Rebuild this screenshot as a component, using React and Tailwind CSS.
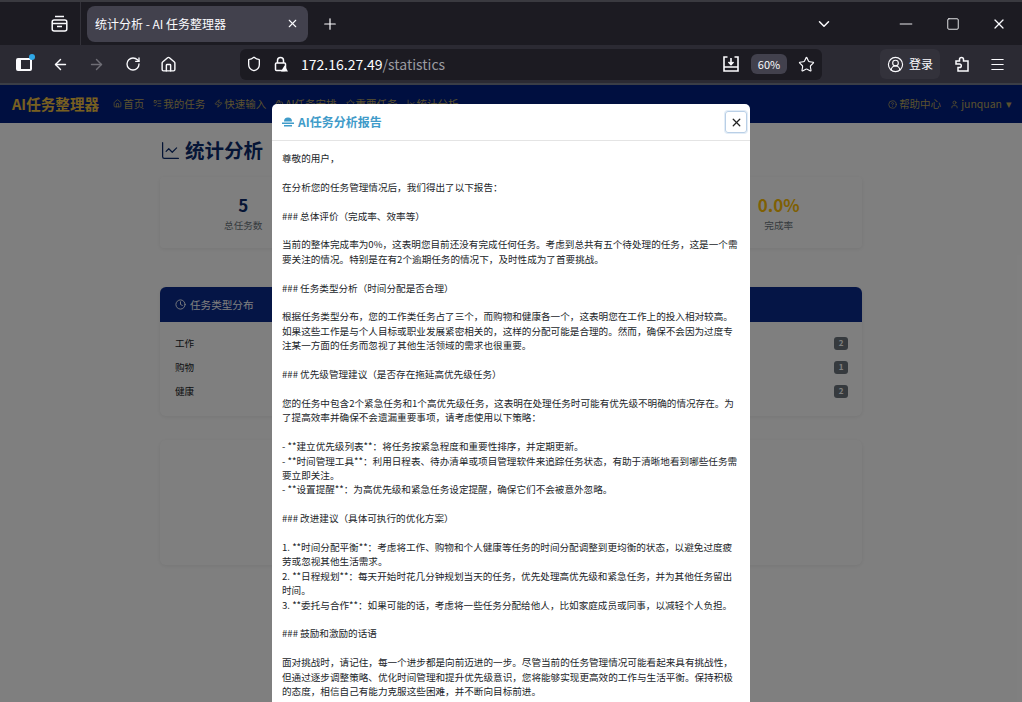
import React from "react";
import {
  ArrowLeft,
  ArrowRight,
  Bot,
  ChevronDown,
  CircleHelp,
  CircleUserRound,
  Clock,
  Home,
  LineChart,
  ListTodo,
  Menu,
  Minus,
  Plus,
  RotateCw,
  Shield,
  Square,
  Star,
  User,
  X,
  Zap,
} from "lucide-react";

const FONT = "[font-family:'Noto_Sans_CJK_SC','Liberation_Sans',sans-serif]";

const report = `尊敬的用户，

在分析您的任务管理情况后，我们得出了以下报告：

### 总体评价（完成率、效率等）

当前的整体完成率为0%，这表明您目前还没有完成任何任务。考虑到总共有五个待处理的任务，这是一个需要关注的情况。特别是在有2个逾期任务的情况下，及时性成为了首要挑战。

### 任务类型分析（时间分配是否合理）

根据任务类型分布，您的工作类任务占了三个，而购物和健康各一个，这表明您在工作上的投入相对较高。如果这些工作是与个人目标或职业发展紧密相关的，这样的分配可能是合理的。然而，确保不会因为过度专注某一方面的任务而忽视了其他生活领域的需求也很重要。

### 优先级管理建议（是否存在拖延高优先级任务）

您的任务中包含2个紧急任务和1个高优先级任务，这表明在处理任务时可能有优先级不明确的情况存在。为了提高效率并确保不会遗漏重要事项，请考虑使用以下策略：

- **建立优先级列表**：将任务按紧急程度和重要性排序，并定期更新。
- **时间管理工具**：利用日程表、待办清单或项目管理软件来追踪任务状态，有助于清晰地看到哪些任务需要立即关注。
- **设置提醒**：为高优先级和紧急任务设定提醒，确保它们不会被意外忽略。

### 改进建议（具体可执行的优化方案）

1. **时间分配平衡**：考虑将工作、购物和个人健康等任务的时间分配调整到更均衡的状态，以避免过度疲劳或忽视其他生活需求。
2. **日程规划**：每天开始时花几分钟规划当天的任务，优先处理高优先级和紧急任务，并为其他任务留出时间。
3. **委托与合作**：如果可能的话，考虑将一些任务分配给他人，比如家庭成员或同事，以减轻个人负担。

### 鼓励和激励的话语

面对挑战时，请记住，每一个进步都是向前迈进的一步。尽管当前的任务管理情况可能看起来具有挑战性，但通过逐步调整策略、优化时间管理和提升优先级意识，您将能够实现更高效的工作与生活平衡。保持积极的态度，相信自己有能力克服这些困难，并不断向目标前进。`;

const navItems = [
  { label: "首页", Icon: Home },
  { label: "我的任务", Icon: ListTodo },
  { label: "快速输入", Icon: Zap },
  { label: "AI任务安排", Icon: Bot },
  { label: "重要任务", Icon: Star },
  { label: "统计分析", Icon: LineChart },
];
const types = [
  { name: "工作", count: 2 },
  { name: "购物", count: 1 },
  { name: "健康", count: 2 },
];

function TitleBar() {
  return (
    <div className="flex h-[45px] shrink-0 items-center border-t-2 border-[#3a3a40] bg-[#1c1b22] text-[#fbfbfe]">
      <div className="flex h-full w-[81px] items-center justify-end border-r border-[#33323a] pr-[12px]">
        <svg width="17" height="17" viewBox="0 0 17 17" fill="none" stroke="currentColor" strokeWidth="1.5">
          <path d="M4 1.5h9" />
          <rect x="1.2" y="5" width="14.6" height="11" rx="2" />
          <path d="M1.2 8.5h14.6M6 11.5h5" />
        </svg>
      </div>
      <div className="ml-[6px] flex h-[36px] w-[221px] items-center justify-between rounded-lg bg-[#42414d] pl-[8px] pr-[9px] text-[12px]">
        <span>统计分析 - AI 任务整理器</span>
        <X size={13} />
      </div>
      <Plus size={18} strokeWidth={1.6} className="ml-[13px]" />
      <div className="flex-1" />
      <ChevronDown size={18} className="mr-[63px]" />
      <Minus size={20} strokeWidth={1.1} className="mr-[30px]" />
      <Square size={14} strokeWidth={1.5} className="mr-[31px]" />
      <X size={16} strokeWidth={1.8} className="mr-[15px]" />
    </div>
  );
}

function Toolbar() {
  return (
    <div className="flex h-[40px] shrink-0 items-center border-b-2 border-[#3b3e46] bg-[#2b2a33] text-[#fbfbfe]">
      <div className="relative ml-[16px] h-[13px] w-[16px] rounded-[2px] border-2 border-l-[5px] border-[#fbfbfe]">
        <span className="absolute -right-[5px] -top-[6px] h-[6px] w-[6px] rounded-full bg-[#2fa8e8]" />
      </div>
      <ArrowLeft size={17} className="ml-[20px]" />
      <ArrowRight size={17} className="ml-[19px] text-[#6f6e76]" />
      <RotateCw size={16} className="ml-[20px]" />
      <Home size={17} className="ml-[19px]" />
      <div className="ml-[63px] flex h-[31px] w-[582px] items-center rounded-md bg-[#1c1b22] pl-[6px] pr-[6px]">
        <Shield size={16} />
        <svg width="16" height="16" viewBox="0 0 16 16" fill="none" stroke="currentColor" strokeWidth="1.5" className="ml-[11px]">
          <rect x="2.5" y="7" width="10" height="7.5" rx="1" />
          <path d="M4.5 7V4.5a3 3 0 0 1 6 0V7" />
          <path d="M11.5 9.5l3.5 6h-7z" fill="#fbfbfe" stroke="none" />
        </svg>
        <span className="ml-[12px] text-[14px] leading-none">
          172.16.27.49<span className="text-[#9a9aa0]">/statistics</span>
        </span>
        <div className="flex-1" />
        <svg width="18" height="18" viewBox="0 0 18 18" fill="none" stroke="currentColor" strokeWidth="1.6" className="mr-[11px]">
          <path d="M5.5 2H2v14h14V2h-3.5M2 12h14M9 3v6M6.5 7L9 9.5 11.5 7" />
        </svg>
        <span className="flex h-[20px] w-[36px] items-center justify-center rounded-md bg-[#42414d] text-[11px]">60%</span>
        <Star size={17} strokeWidth={1.6} className="ml-[11px] mr-[1px]" />
      </div>
      <div className="ml-[58px] flex h-[30px] w-[60px] items-center justify-center gap-[5px] rounded-md bg-[#33323b] text-[12px]">
        <CircleUserRound size={17} strokeWidth={1.6} />
        <span>登录</span>
      </div>
      <svg width="17" height="17" viewBox="0 0 17 17" fill="none" stroke="currentColor" strokeWidth="1.5" className="ml-[14px]">
        <path d="M2 5h3.5V3.5a2 2 0 0 1 4 0V5H14v10H4v-3.5h1.5a1.8 1.8 0 0 0 0-3.6H2z" />
      </svg>
      <Menu size={17} strokeWidth={1.6} className="ml-[18px]" />
    </div>
  );
}

function StatCard({ value, label, gold }) {
  return (
    <div className="flex h-[71px] flex-1 flex-col items-center justify-center rounded bg-white shadow-[0_1px_4px_rgba(0,0,0,0.08)]">
      {value && (
        <div className={`text-[17px] font-bold leading-[24px] ${gold ? "text-[#ffc107]" : "text-[#0d2a6b]"}`}>{value}</div>
      )}
      {label && <div className="mt-[1px] text-[9.6px] leading-[14px] text-[#6c757d]">{label}</div>}
    </div>
  );
}

function StatisticsPage() {
  return (
    <div className="absolute inset-0 bg-white">
      <div className="flex h-[38px] items-center justify-between bg-[#001f80] pl-[12px] pr-[10px] text-[10.5px] text-[#b8a45c]">
        <div className="flex items-center">
          <span className="mr-[14px] text-[14.6px] font-bold text-[#f0c040]">AI任务整理器</span>
          <div className="flex gap-[9px]">
            {navItems.map(({ label, Icon }) => (
              <span key={label} className="flex items-center gap-[1px]">
                <Icon size={9} />
                {label}
              </span>
            ))}
          </div>
        </div>
        <div className="flex gap-[9px]">
          <span className="flex items-center gap-[2px]">
            <CircleHelp size={9} />
            帮助中心
          </span>
          <span className="flex items-center gap-[2px]">
            <User size={9} />
            junquan
            <span className="ml-[2px]">▾</span>
          </span>
        </div>
      </div>
      <div className="px-[160px] pt-[13px]">
        <div className="flex items-center gap-[4px] text-[#0a2a6c]">
          <LineChart size={21} strokeWidth={1.4} />
          <h1 className="text-[19.5px] font-bold leading-[28px]">统计分析</h1>
        </div>
        <div className="mt-[13px] flex gap-[12px]">
          <StatCard value="5" label="总任务数" />
          <StatCard />
          <StatCard />
          <StatCard value="0.0%" label="完成率" gold />
        </div>
        <div className="mt-[39px] rounded-md bg-white shadow-[0_1px_4px_rgba(0,0,0,0.08)]">
          <div className="flex h-[35px] items-center gap-[4px] rounded-t-md bg-[#0a2a8c] pl-[15px] text-[10.6px] text-white">
            <Clock size={11} />
            <span>任务类型分布</span>
          </div>
          <div className="flex flex-col gap-[10px] pb-[18px] pl-[15px] pr-[14px] pt-[14px] text-[9.6px] leading-[14px] text-[#212529]">
            {types.map((t) => (
              <div key={t.name} className="flex items-center justify-between">
                <span>{t.name}</span>
                <span className="flex h-[13px] w-[14px] items-center justify-center rounded-[3px] bg-[#6c757d] text-[8px] font-bold text-white">{t.count}</span>
              </div>
            ))}
          </div>
        </div>
        <div className="mt-[24px] h-[125px] rounded-md bg-white shadow-[0_1px_4px_rgba(0,0,0,0.08)]" />
      </div>
    </div>
  );
}

function ReportModal() {
  return (
    <div className="absolute left-[272px] top-[19px] flex w-[478px] flex-col rounded-t-[5px] bg-white">
      <div className="flex h-[37px] items-center justify-between border-b border-[#e4e4e4] pl-[10px] pr-[3px]">
        <div className="flex items-center gap-[4px] text-[12px] font-bold text-[#3f9bc9]">
          <svg width="12" height="10" viewBox="0 0 12 10" fill="currentColor">
            <path d="M2 4.5a4 4 0 0 1 8 0zM0 5.5h12V7H0zM2 8h8v1.5H2z" />
          </svg>
          <span>AI任务分析报告</span>
        </div>
        <button className="flex h-[22px] w-[22px] items-center justify-center rounded-[3px] border border-[#b9cfe6] text-[#222] shadow-[0_0_0_1px_#e3edf7]">
          <X size={13} strokeWidth={2.4} />
        </button>
      </div>
      <div className="whitespace-pre-wrap px-[10px] pb-[24px] pt-[10px] text-[9.6px] leading-[14.4px] text-[#212529]">{report}</div>
    </div>
  );
}

export default function App() {
  return (
    <div className={`flex h-screen w-full flex-col overflow-hidden ${FONT}`}>
      <TitleBar />
      <Toolbar />
      <div className="relative flex-1 overflow-hidden">
        <StatisticsPage />
        <div className="absolute inset-0 bg-black/50" />
        <ReportModal />
      </div>
    </div>
  );
}
